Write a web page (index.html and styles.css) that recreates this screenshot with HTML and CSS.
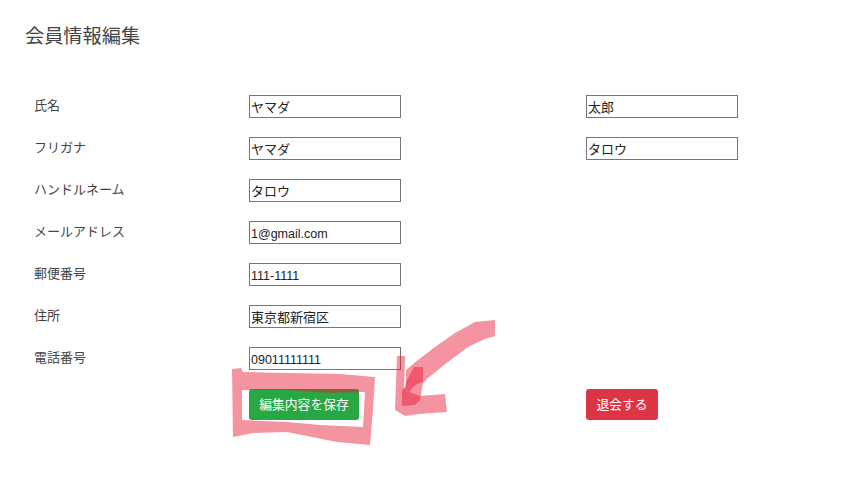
FILE: index.html
```html
<!DOCTYPE html>
<html lang="ja">
<head>
    <meta charset="UTF-8">
    <title>会員情報編集</title>
    <link rel="stylesheet" href="styles.css">
</head>
<body>

    <h1 class="page-title">会員情報編集</h1>

    <!-- Edit form -->
    <div class="edit-form">
        <label class="form-label">氏名</label>
        <input class="form-input" type="text" value="ヤマダ">
        <input class="form-input" type="text" value="太郎">

        <label class="form-label">フリガナ</label>
        <input class="form-input" type="text" value="ヤマダ">
        <input class="form-input" type="text" value="タロウ">

        <label class="form-label">ハンドルネーム</label>
        <input class="form-input wide-cell" type="text" value="タロウ">

        <label class="form-label">メールアドレス</label>
        <input class="form-input wide-cell latin-input" type="text" value="1@gmail.com">

        <label class="form-label">郵便番号</label>
        <input class="form-input wide-cell latin-input" type="text" value="111-1111">

        <label class="form-label">住所</label>
        <input class="form-input wide-cell" type="text" value="東京都新宿区">

        <label class="form-label">電話番号</label>
        <input class="form-input wide-cell latin-input" type="text" value="09011111111">

        <div class="button-cell">
            <button class="save-btn">編集内容を保存</button>
        </div>
        <div>
            <button class="leave-btn">退会する</button>
        </div>
    </div>

    <!-- Hand-drawn marks on top of the page -->
    <svg class="marks" width="868" height="486" viewBox="0 0 868 486">
        <path class="mark" fill-rule="evenodd" d="M232 369 L241 368 L243 372 L287 373 L340 374 L375 377 L373 410 L370 445 L337 442 L287 432 L253 433 L233 437 Z M242 390 L242 420 L287 422 L320 425 L363 427 L365 392 L330 393 L287 390 Z"/>
        <path class="mark" d="M495 320 L495 336 L485 339 L468 347 L448 362 L428 378 L423 383 L420 400 L415 405 L402 406 L402 390 L406 387 L406 370 L418 360 L435 347 L455 333 L475 322 Z"/>
        <path class="mark" d="M397 356 L405 356 L404 390 L420 396 L445 394 L447 412 L418 414 L405 416 L395 410 Z"/>
        <path class="mark" d="M414 367 L423 367 L423 382 L417 384 L412 388 L410 392 L404 390 L406 382 Z"/>
    </svg>

</body>
</html>
```

FILE: styles.css
```css
body {
    font-family: "Noto Sans CJK JP", sans-serif;
    color: #444;
    background-color: white;
    margin: 0;
    padding: 23px 25px 0;
}

.page-title {
    font-size: 19.2px;
    font-weight: 400;
    line-height: 24px;
    margin: 0 0 48px;
}

/* Form grid */
.edit-form {
    display: grid;
    grid-template-columns: 215px 337px 152px;
    grid-template-rows: repeat(7, 23px) 31px;
    row-gap: 19px;
    padding-left: 9px;
}

.form-label {
    font-size: 13px;
    line-height: 19px;
}

.form-input {
    box-sizing: border-box;
    width: 152px;
    height: 23px;
    border: 1px solid #767676;
    padding: 1px;
    margin: 0;
    font-family: "Noto Sans CJK JP", sans-serif;
    font-size: 13px;
    color: #222;
}

.latin-input {
    font-family: "Liberation Sans", sans-serif;
    font-size: 12.5px;
    padding-top: 3px;
}

.wide-cell {
    grid-column: 2 / 4;
}

.button-cell {
    grid-column: 2;
}

/* Buttons */
.save-btn, .leave-btn {
    display: block;
    height: 31px;
    border: none;
    border-radius: 3px;
    color: white;
    font-family: "Noto Sans CJK JP", sans-serif;
    font-size: 12.8px;
    padding: 0 0 2px;
}

.save-btn {
    width: 110px;
    background-color: #28a745;
}

.leave-btn {
    width: 72px;
    background-color: #dc3545;
}

/* Marks overlay */
.marks {
    position: absolute;
    top: 0;
    left: 0;
    filter: blur(0.6px);
}

.mark {
    fill: #e8152f;
    opacity: 0.46;
}
```
